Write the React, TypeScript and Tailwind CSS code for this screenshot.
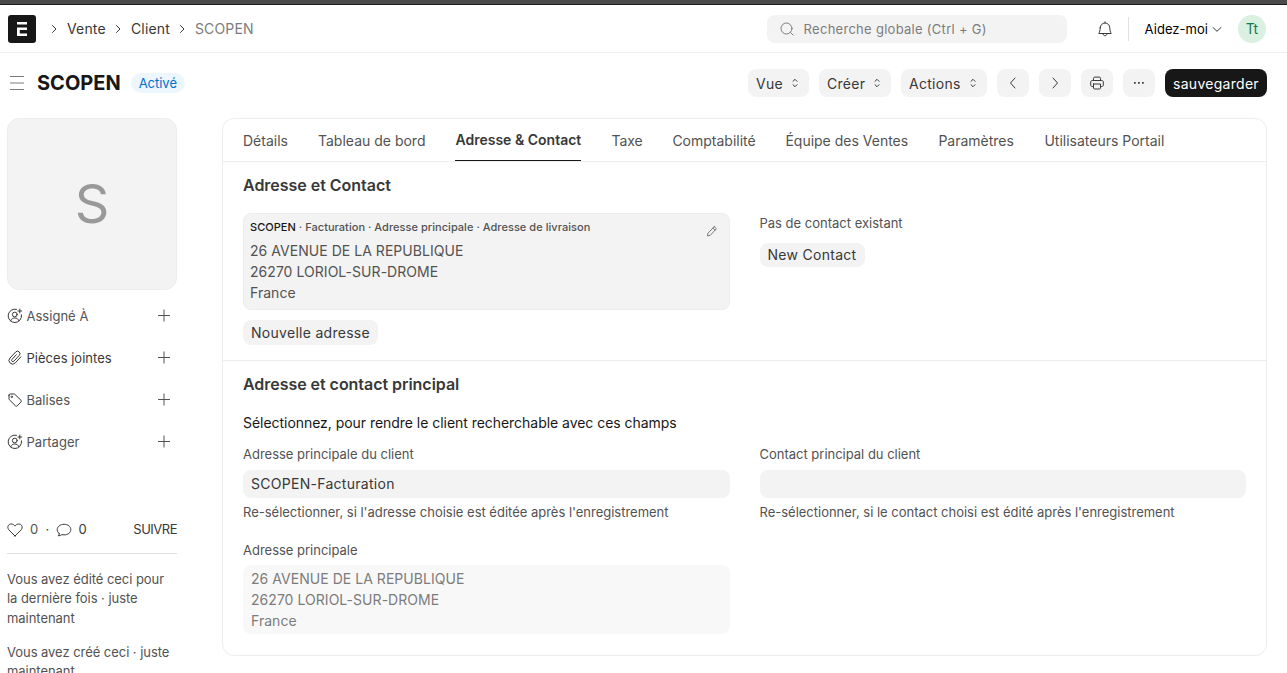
import type { ReactNode } from 'react';

const tabs = [
  { label: 'Détails', width: 'w-[45px]' },
  { label: 'Tableau de bord', width: 'w-[107px]' },
  { label: 'Adresse & Contact', width: 'w-[126.4px]', active: true },
  { label: 'Taxe', width: 'w-[31px]' },
  { label: 'Comptabilité', width: 'w-[83px]' },
  { label: 'Équipe des Ventes', width: 'w-[123px]' },
  { label: 'Paramètres', width: 'w-[76px]' },
  { label: 'Utilisateurs Portail', width: 'w-[122px]' },
];

const address = ['26 AVENUE DE LA REPUBLIQUE', '26270 LORIOL-SUR-DROME', 'France'];

function Icon({ children, className = 'size-4' }: { children: ReactNode; className?: string }) {
  return (
    <svg
      viewBox="0 0 16 16"
      fill="none"
      stroke="currentColor"
      strokeLinecap="round"
      strokeLinejoin="round"
      className={`shrink-0 ${className}`}
    >
      {children}
    </svg>
  );
}

function ChevronRight({ className }: { className?: string }) {
  return (
    <Icon className={className}>
      <path d="M6.5 4.5 10 8l-3.5 3.5" />
    </Icon>
  );
}

function AssignIcon() {
  return (
    <Icon>
      <path d="M9.5 1.300A6.700 6.700 0 1 0 14.500 6.800" />
      <circle cx="7.800" cy="6.500" r="2.400" />
      <path d="M3.600 12.800c.6-1.800 2.200-2.800 4.200-2.800s3.600 1 4.200 2.800M12.800 1.100v3.800M10.900 3h3.800" />
    </Icon>
  );
}

function AttachIcon() {
  return (
    <Icon>
      <path d="m13.800 6.900-5.500 6a3.600 3.600 0 0 1-5.300-4.900l5.600-6a2.500 2.500 0 0 1 3.700 3.400l-5.400 5.800a1.300 1.300 0 0 1-1.900-1.800l4.300-4.600" />
    </Icon>
  );
}

function TagIcon() {
  return (
    <Icon>
      <path d="M2 3.200v3.700c0 .3.100.6.300.8l6.300 6.200c.4.400 1.100.4 1.500 0l4-4c.4-.4.4-1.100 0-1.500L7.800 2.300A1.200 1.200 0 0 0 7 2H3.200A1.200 1.200 0 0 0 2 3.200Z" />
      <circle cx="4.800" cy="4.800" r=".7" />
    </Icon>
  );
}

function SidebarRow({ icon, label, dark }: { icon: ReactNode; label: string; dark?: boolean }) {
  return (
    <div className="flex h-[42px] items-center text-[13px] tracking-[0.02px] text-[#525252]">
      <span className="mr-[3.5px] text-[#383838]">{icon}</span>
      <span className={dark ? 'pt-0.5 text-[#383838]' : 'pt-0.5'}>{label}</span>
      <svg viewBox="0 0 16 16" className="mr-[5px] mb-[2px] ml-auto size-4 shrink-0" stroke="#525252">
        <path d="M8 2.500v12M2 8.500h12" />
      </svg>
    </div>
  );
}

function MenuButton({ label, className }: { label: string; className: string }) {
  return (
    <button className={`flex h-7 items-center justify-between rounded-lg bg-[#f3f3f3] pr-1.5 pl-2 ${className}`}>
      {label}
      <Icon>
        <path d="M6 6.300 8 4.300l2 2M6 9.700l2 2 2-2" />
      </Icon>
    </button>
  );
}

function IconButton({ children }: { children: ReactNode }) {
  return <button className="flex h-7 w-8 items-center justify-center rounded-lg bg-[#f3f3f3]">{children}</button>;
}

export default function App() {
  return (
    <div className="h-[673px] w-[1287px] overflow-hidden bg-white font-[Inter,sans-serif] text-[14px] font-[420] tracking-[0.28px] whitespace-nowrap text-[#383838]">
      <div className="h-[5px] border-b border-[#1a1a1a] bg-[#4a4a4a]" />

      <header className="flex h-12 items-center border-b border-[#ededed] pr-[21px] pl-2">
        <svg viewBox="0 0 28 28" className="mr-[10px] size-7">
          <rect width="28" height="28" rx="3" fill="#171717" />
          <path d="M9 7h10v2.500H9zM9 12.500h10V15h-7.200v3.500H19V21H9z" fill="#fff" />
        </svg>
        <nav className="flex items-center tracking-[0.14px]">
          <ChevronRight className="size-4" />
          <span className="ml-[5px] w-[43px]">Vente</span>
          <ChevronRight className="size-4" />
          <span className="ml-[5px] w-[43px]">Client</span>
          <ChevronRight className="size-4" />
          <span className="ml-[5px] text-[#7c7c7c]">SCOPEN</span>
        </nav>

        <div className="ml-auto flex h-7 w-[300px] items-center rounded-lg bg-[#f3f3f3] pl-3 text-[13px] text-[#7c7c7c]">
          <Icon className="mr-[9px] size-4">
            <circle cx="7.500" cy="7.500" r="5.500" />
            <path d="m11.600 11.600 2.400 2.400" />
          </Icon>
          <span className="pt-0.5">Recherche globale (Ctrl + G)</span>
        </div>
        <Icon className="mr-[15px] ml-[30px] size-4">
          <path d="M8 .8v1M3.200 6.800a4.800 4.800 0 0 1 9.600 0c0 2.500.6 4.200 1.400 5.700H1.800C2.600 11 3.200 9.300 3.200 6.800ZM6 12.700c0 1.200.8 2 2 2s2-.8 2-2" />
        </Icon>
        <div className="h-6 w-px bg-[#e2e2e2]" />
        <span className="ml-4 pt-0.5 text-[13px] tracking-[0.04px] text-black">Aidez-moi</span>
        <Icon className="mr-[13px] ml-px size-4">
          <path d="M4 6.500 8 10.300l4-3.800" />
        </Icon>
        <div className="flex size-7 items-center justify-center rounded-full bg-[#daf0e1] text-[14px] text-[#16794c]">Tt</div>
      </header>

      <div className="flex h-[65px] items-start pt-4 pr-5 pl-2">
        <svg viewBox="0 0 16 16" className="mt-1.5 mr-3 ml-px size-4" stroke="#7c7c7c">
          <path d="M1 1.500h14M1 8h14M1 14.500h14" />
        </svg>
        <h1 className="text-[20px] leading-7 font-bold tracking-[0px] text-[#171717]">SCOPEN</h1>
        <span className="mt-1 ml-[10px] flex h-5 items-center rounded-full bg-[#edf6fd] px-2 pt-px text-[13px] tracking-[-0.02px] text-[#0070cc]">Activé</span>
        <div className="ml-auto flex gap-[10px]">
          <MenuButton label="Vue" className="w-[61px]" />
          <MenuButton label="Créer" className="w-[72px]" />
          <MenuButton label="Actions" className="w-[86px]" />
          <IconButton>
            <Icon>
              <path d="M10 3 5.500 8l4.500 5" />
            </Icon>
          </IconButton>
          <IconButton>
            <Icon>
              <path d="M6 3l4.500 5L6 13" />
            </Icon>
          </IconButton>
          <IconButton>
            <Icon>
              <path d="M4.500 5.500V3.300c0-.7.500-1.200 1.200-1.200h4.600c.7 0 1.200.5 1.200 1.200v2.200M4.500 11.500H3.200c-.9 0-1.500-.6-1.500-1.500V7c0-.9.600-1.500 1.500-1.500h9.600c.9 0 1.500.6 1.500 1.500v3c0 .9-.6 1.500-1.500 1.500h-1.300M4.500 9h7v4c0 .6-.4 1-1 1h-5c-.6 0-1-.4-1-1V9Z" />
            </Icon>
          </IconButton>
          <IconButton>
            <svg viewBox="0 0 16 16" className="size-4" fill="#383838">
              <path d="M3 7h1.700v1.700H3zM7 7h1.700v1.700H7zM11 7h1.700v1.700H11z" />
            </svg>
          </IconButton>
          <button className="h-7 w-[102px] rounded-lg bg-[#171717] text-center text-white">sauvegarder</button>
        </div>
      </div>

      <div className="flex items-start pl-[7px]">
        <aside className="w-[170px]">
          <div className="flex h-[172px] items-center justify-center rounded-xl border border-[#ededed] bg-[#f3f3f3] pb-0.5 text-[54px] font-normal tracking-normal text-[#999999]">
            S
          </div>
          <div className="mt-[5px]">
            <SidebarRow icon={<AssignIcon />} label="Assigné À" />
            <SidebarRow icon={<AttachIcon />} label="Pièces jointes" dark />
            <SidebarRow icon={<TagIcon />} label="Balises" />
            <SidebarRow icon={<AssignIcon />} label="Partager" />
          </div>
          <div className="mt-[46px] flex h-[45px] items-center border-b border-[#e2e2e2] pb-0.5 text-[13px]">
            <Icon>
              <path d="M8 14 1.700 7.700C-.2 5 1.300 2 4.200 2 6 2 7.200 2.900 8 4.100 8.800 2.900 10 2 11.800 2c2.900 0 4.400 3 2.500 5.700L8 14Z" />
            </Icon>
            <span className="ml-[7px] text-[#525252]">0</span>
            <span className="mr-1.5 ml-[7px]">·</span>
            <Icon>
              <path d="M3.200 11.500C1.900 10.500 1.200 9.200 1.200 7.700c0-3 3-5.400 6.900-5.400s6.700 2.300 6.700 5.300-2.800 5.300-6.700 5.300c-.8 0-1.500-.1-2.200-.3-.9.800-2.200 1.200-3.700 1.200.7-.6 1-1.500 1-2.300Z" />
            </Icon>
            <span className="ml-[7px]">0</span>
            <span className="ml-auto tracking-[-0.5px]">SUIVRE</span>
          </div>
          <div className="mt-4 text-[13px] leading-[19.3px] tracking-[-0.05px] text-[#525252]">
            <p>
              Vous avez édité ceci pour
              <br />
              la dernière fois · juste
              <br />
              maintenant
            </p>
            <p className="mt-[15.1px]">
              Vous avez créé ceci · juste
              <br />
              maintenant
            </p>
          </div>
        </aside>

        <main className="ml-[45px] h-[538px] w-[1045px] rounded-xl border border-[#ededed]">
          <div className="flex h-[43px] gap-[30px] border-b border-[#ededed] pl-5 tracking-[0px] text-[#525252]">
            {tabs.map((tab) =>
              tab.active ? (
                <div key={tab.label} className={`h-[42px] border-b border-[#171717] pl-[0.5px] leading-[42px] font-semibold text-[#383838] ${tab.width}`}>
                  {tab.label}
                </div>
              ) : (
                <div key={tab.label} className={`leading-[43px] ${tab.width}`}>
                  {tab.label}
                </div>
              ),
            )}
          </div>

          <section className="h-[199px] border-b border-[#ededed] px-5 pt-[11px]">
            <h2 className="text-[16px] leading-6 font-semibold tracking-[-0.02px]">Adresse et Contact</h2>
            <div className="mt-4 grid grid-cols-2 gap-[30px]">
              <div>
                <div className="flex h-[97px] justify-between rounded-lg border border-[#ededed] bg-[#f3f3f3] pt-1 pr-[11px] pl-1.5 text-[#525252]">
                  <div>
                    <p className="mb-1 text-[11px] leading-[18px] font-medium tracking-[0.04px]">
                      <span className="text-[#171717]">SCOPEN</span> · Facturation · Adresse principale · Adresse de livraison
                    </p>
                    {address.map((line) => (
                      <p key={line} className="leading-[21px] tracking-[0.04px]">{line}</p>
                    ))}
                  </div>
                  <Icon className="mt-[7px] size-3">
                    <path d="m11 2.200 2.800 2.800-8.300 8.900-3.500.6.500-3.400L11 2.200ZM9.300 4.200 12 6.900" />
                  </Icon>
                </div>
                <button className="mt-[10px] h-[25px] w-[135px] rounded-lg bg-[#f3f3f3]">Nouvelle adresse</button>
              </div>
              <div>
                <p className="text-[13px] leading-5 tracking-[0px] text-[#525252]">Pas de contact existant</p>
                <button className="mt-[10px] h-6 w-[105px] rounded-lg bg-[#f3f3f3] pb-0.5">New Contact</button>
              </div>
            </div>
          </section>

          <section className="px-5 pt-[11px]">
            <h2 className="text-[16px] leading-6 font-semibold tracking-[-0.04px]">Adresse et contact principal</h2>
            <p className="mt-4 leading-[21px] tracking-[-0.04px] text-[#171717]">Sélectionnez, pour rendre le client recherchable avec ces champs</p>
            <div className="mt-[11px] grid grid-cols-2 gap-[30px] text-[13px] leading-5 tracking-[-0.01px] text-[#525252]">
              <div>
                <p>Adresse principale du client</p>
                <div className="mt-1.5 h-7 rounded-lg bg-[#f3f3f3] pl-2 text-[14px] leading-7 tracking-[0.28px] text-[#383838]">SCOPEN-Facturation</div>
                <p className="mt-1">Re-sélectionner, si l'adresse choisie est éditée après l'enregistrement</p>
                <p className="mt-[18px]">Adresse principale</p>
                <div className="mt-[5px] h-[69px] rounded-lg bg-[#f8f8f8] pt-[3px] pl-2 text-[14px] leading-[21px] tracking-[0.04px] text-[#7c7c7c]">
                  {address.map((line) => (
                    <p key={line}>{line}</p>
                  ))}
                </div>
              </div>
              <div>
                <p>Contact principal du client</p>
                <div className="mt-1.5 h-7 rounded-lg bg-[#f3f3f3]" />
                <p className="mt-1">Re-sélectionner, si le contact choisi est édité après l'enregistrement</p>
              </div>
            </div>
          </section>
        </main>
      </div>
    </div>
  );
}
